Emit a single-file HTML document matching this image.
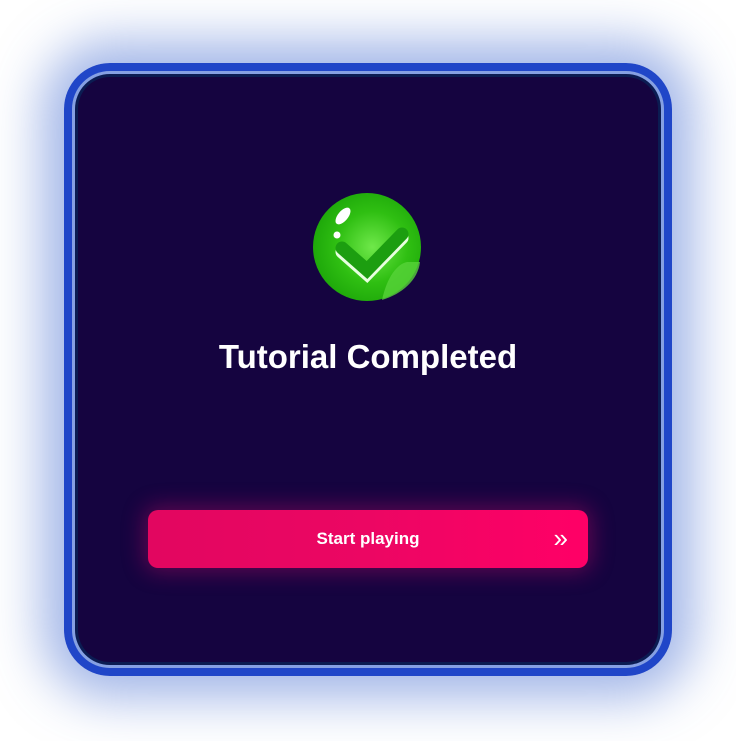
<!DOCTYPE html>
<html><head><style>
html,body{margin:0;padding:0;width:736px;height:741px;background:#fff;overflow:hidden;font-family:"Liberation Sans",sans-serif}
.glow{position:absolute;left:64px;top:63px;width:608px;height:613px;border-radius:46px;box-shadow:0 0 50px 22px rgba(70,110,210,.5)}
.card{position:absolute;left:64px;top:63px;width:608px;height:613px;border-radius:46px;background:#2046c8;box-sizing:border-box}
.l1{position:absolute;left:8px;top:8px;right:8px;bottom:8px;border-radius:38px;background:#86a0e2}
.l2{position:absolute;left:11px;top:11px;right:11px;bottom:11px;border-radius:35px;background:#0b1c52}
.l3{position:absolute;left:14px;top:14px;right:14px;bottom:14px;border-radius:32px;background:#150440}
h1{position:absolute;left:0;width:736px;top:338px;margin:0;text-align:center;color:#fff;font-size:33px;font-weight:bold}
.btn{position:absolute;left:148px;top:510px;width:440px;height:58px;border-radius:10px;background:linear-gradient(90deg,#e20660,#ec0663 50%,#ff0066);box-shadow:0 0 22px 4px rgba(230,10,110,.35);color:#fff;font-size:17px;font-weight:bold;text-align:center;line-height:58px}
.arr{position:absolute;right:20px;top:-1px;font-size:26px;font-weight:normal}
</style></head><body>
<div class="glow"></div>
<div class="card"><div class="l1"></div><div class="l2"></div><div class="l3"></div></div>
<svg style="position:absolute;left:312px;top:192px" width="110" height="110" viewBox="0 0 110 110">
<defs><radialGradient id="g" cx="0.55" cy="0.5" r="0.55"><stop offset="0" stop-color="#6fe84a"/><stop offset="0.6" stop-color="#2fbf12"/><stop offset="1" stop-color="#1ea80a"/></radialGradient></defs>
<circle cx="55" cy="55" r="54" fill="url(#g)"/>
<path d="M95 70 C85 72 75 85 70 108 C90 102 106 88 108 70 Z" fill="#58d33a" opacity=".8"/>
<path d="M30 58 L55 80 L90 44" stroke="#e8ffe0" stroke-width="13" fill="none" stroke-linecap="round" transform="translate(0,2)"/>
<path d="M30 56 L55 78 L90 42" stroke="#1c9e10" stroke-width="13" fill="none" stroke-linecap="round"/>
<ellipse cx="31" cy="24" rx="5" ry="10" transform="rotate(40 31 24)" fill="#fff"/>
<circle cx="25" cy="43" r="3.5" fill="#fff"/>
</svg>
<h1>Tutorial Completed</h1>
<div class="btn">Start playing<span class="arr">»</span></div>
</body></html>
